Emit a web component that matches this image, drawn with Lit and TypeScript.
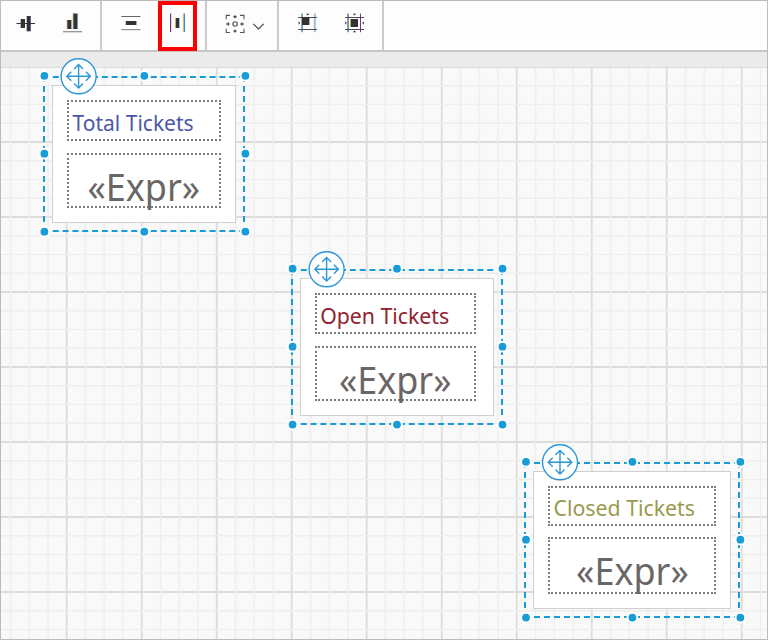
import { LitElement, html, svg, css } from "lit";
import { customElement, property } from "lit/decorators.js";
import { styleMap } from "lit/directives/style-map.js";

interface Box { x: number; y: number; w: number; h: number; }
interface Label { text: string; x: number; y: number; len: number; size: number; }
interface Tile {
  frame: Box;
  card: Box;
  title: Box;
  value: Box;
  color: string;
  titleText: Label;
  valueText: Label;
  hx: number[];
  hy: number[];
  move: [number, number];
}

const TILES: Tile[] = [
  {
    frame: { x: 43, y: 76, w: 202, h: 156 },
    card: { x: 52, y: 85, w: 184, h: 138 },
    title: { x: 67, y: 100, w: 154, h: 41 },
    value: { x: 67, y: 153, w: 154, h: 55 },
    color: "#4c56a6",
    titleText: { text: "Total Tickets", x: 72.6, y: 131, len: 121, size: 22.4 },
    valueText: { text: "«Expr»", x: 87.5, y: 201, len: 112.6, size: 38.4 },
    hx: [44.4, 144.3, 245.4], hy: [75.8, 153.7, 231.7], move: [78.6, 76.3],
  },
  {
    frame: { x: 291, y: 269, w: 212, h: 156 },
    card: { x: 300, y: 278, w: 194, h: 138 },
    title: { x: 315, y: 293, w: 161, h: 41 },
    value: { x: 315, y: 346, w: 161, h: 55 },
    color: "#922230",
    titleText: { text: "Open Tickets", x: 320.2, y: 324, len: 129, size: 22.4 },
    valueText: { text: "«Expr»", x: 338.9, y: 394, len: 112.6, size: 38.4 },
    hx: [292.6, 397, 502.5], hy: [268.7, 346.7, 424.6], move: [326.6, 269.3],
  },
  {
    frame: { x: 524, y: 462, w: 216, h: 156 },
    card: { x: 533, y: 471, w: 198, h: 138 },
    title: { x: 548, y: 486, w: 168, h: 40 },
    value: { x: 548, y: 537, w: 168, h: 57 },
    color: "#9a9a4e",
    titleText: { text: "Closed Tickets", x: 553.5, y: 516, len: 141.5, size: 22.4 },
    valueText: { text: "«Expr»", x: 576.1, y: 585, len: 112.6, size: 38.4 },
    hx: [526, 632.4, 740.4], hy: [461.8, 539.7, 617.6], move: [560, 462.3],
  },
];

@customElement("report-tile")
class ReportTile extends LitElement {
  @property({ attribute: false }) tile!: Tile;

  static styles = css`
    :host { display: contents; }
    .box { position: absolute; box-sizing: border-box; }
    .card { background: #fff; border: 1px solid #cfcfcf; }
    .dotted { border: 2px dotted #7c7c7c; }
    .frame { border: 2px dashed #189cd8; }
    .layer { position: absolute; left: 0; top: 0; width: 768px; height: 640px; pointer-events: none; }
    text { font-family: "Noto Sans", "Open Sans", sans-serif; }
  `;

  private box(cls: string, b: Box) {
    const s = { left: `${b.x}px`, top: `${b.y}px`, width: `${b.w}px`, height: `${b.h}px` };
    return html`<div class="box ${cls}" style=${styleMap(s)}></div>`;
  }

  private label(l: Label, fill: string) {
    return svg`<text x=${l.x} y=${l.y} font-size=${l.size} fill=${fill} textLength=${l.len} lengthAdjust="spacingAndGlyphs">${l.text}</text>`;
  }

  render() {
    const t = this.tile;
    const handles = t.hy.flatMap((y, r) => t.hx.filter((_, c) => !(r === 1 && c === 1)).map((x) => [x, y]));
    return html`
      ${this.box("card", t.card)}
      ${this.box("dotted", t.title)}
      ${this.box("dotted", t.value)}
      ${this.box("frame", t.frame)}
      <svg class="layer" viewBox="0 0 768 640">
        ${this.label(t.titleText, t.color)}
        ${this.label(t.valueText, "#6a6666")}
        ${handles.map(([x, y]) => svg`<circle cx=${x} cy=${y} r="4.9" fill="#189cd8" stroke="#fff" stroke-width="2"/>`)}
        <g transform="translate(${t.move[0]} ${t.move[1]})" fill="none" stroke="#2d97d5" stroke-width="1.4">
          <circle r="17.5" fill="#fff"/>
          <path d="M0-12V12M-12 0H12M-4.5-7.3L0-11.8L4.5-7.3M-4.5 7.3L0 11.8L4.5 7.3M-7.3-4.5L-11.8 0L-7.3 4.5M7.3-4.5L11.8 0L7.3 4.5"/>
        </g>
      </svg>`;
  }
}

const icon = (body: unknown) => html`<svg class="icon" viewBox="0 0 20 20">${body}</svg>`;

const alignMiddle = svg`
  <path d="M0.5 10.5H19" stroke="#333" fill="none"/>
  <path d="M4.7 6H9V15H4.7Z" fill="#333"/>
  <path d="M10.7 3H14.3V18.3H10.7Z" fill="#333"/><path d="M14.3 3H15V18.3H14.3Z" fill="#3a3a8c"/>`;
const alignBottom = svg`
  <path d="M1 18.7H20" stroke="#929292" stroke-width="1.3"/>
  <path d="M5.2 7H9.4V16H5.2ZM11.2 0.4H15.6V16H11.2Z" fill="#333"/>
  <path d="M4.6 7H5.2V16H4.6ZM10.6 0.4H11.2V16H10.6Z" fill="#e6b06c"/>
  <path d="M9.4 7H9.9V16H9.4ZM15.6 0.4H16.1V16H15.6Z" fill="#7fb4e0"/>`;
const spaceVertical = svg`
  <path d="M0.4 3.5H19.4" stroke="#646464"/><path d="M0.4 16.6H19.4" stroke="#929292" stroke-width="1.2"/>
  <path d="M5 8H15V12H5Z" fill="#333"/><path d="M4.2 8H5V12H4.2Z" fill="#e6b06c"/><path d="M15 8H15.5V12H15Z" fill="#3a4a9c"/>`;
const spaceHorizontal = svg`
  <path d="M3.5 0.5V19" stroke="#8c2a6b"/><path d="M4.5 0.5V19" stroke="#c9e6f2"/>
  <path d="M16.5 0.5V19" stroke="#e3b47a"/><path d="M17.5 0.5V19" stroke="#3390d2"/>
  <path d="M9 5H12V15H9Z" fill="#333"/><path d="M8 5H9V15H8Z" fill="#e0a560"/><path d="M12 5H12.8V15H12Z" fill="#7fb4e0"/>`;
const centerInParent = svg`
  <path d="M1.2 6.2V2.4H5M15 2.4H19V6.2M1.2 15.8V19.5H5M15 19.5H19V15.8" stroke="#555" stroke-width="1.1" fill="none"/>
  <rect x="8" y="9" width="4.2" height="4" rx="1.2" stroke="#4d4844" stroke-width="1.2" fill="none"/>
  <path d="M10 2.2V5M8.4 3.9H11.6M10 16.8V19.6M8.4 18H11.6M1 11H4.6M3.2 9.6V12.4M15.4 11H19M16.8 9.6V12.4" stroke="#333" stroke-width="1.2" fill="none"/>`;
const snapCorner = svg`
  <path d="M5.4 0.6V19.2" stroke="#4ba5dc"/><path d="M4.7 0.6V19.2" stroke="#555" stroke-width=".6"/>
  <path d="M17.2 0.6V19.2" stroke="#e9bd88" stroke-width=".8"/><path d="M18 0.6V19.2" stroke="#3c94d4" stroke-width=".9"/>
  <path d="M1.4 4.5H20M1.4 16.5H20" stroke="#4b4b4b"/>
  <path d="M5 4H12.4V12H5Z" fill="#333"/>
  <path d="M9 0.8H12.4L10.7 2.6ZM1.6 8.3V11.7L3.2 10Z" fill="#333"/>`;
const snapGrid = svg`
  <path d="M4.4 0.6V19.2" stroke="#3c94d4"/><path d="M3.6 0.6V19.2" stroke="#555" stroke-width=".6"/><path d="M16.5 0.6V19.2" stroke="#8c2a8a"/>
  <path d="M1.2 4.5H20M1.2 16.5H20" stroke="#4b4b4b"/>
  <path d="M6.8 6H14V14H6.8Z" fill="#333"/><path d="M6 6H7V14H6Z" fill="#e09a45"/>
  <path d="M8.8 0.8H12.2L10.5 2.6ZM8.8 19.3H12.2L10.5 17.6ZM1.2 8.3V11.7L2.8 10ZM19.8 8.3V11.7L18.2 10Z" fill="#333"/>`;

@customElement("app-root")
class AppRoot extends LitElement {
  static styles = css`
    :host { display: block; }
    .app {
      box-sizing: border-box; width: 768px; height: 640px; position: relative; overflow: hidden;
      display: flex; flex-direction: column; border: 1px solid #bcbcbc; background: #f9f9f9;
    }
    .toolbar { display: flex; height: 49px; flex: none; background: #fdfdfd; border-bottom: 2px solid #c6c6c6; }
    .group { display: flex; box-sizing: border-box; border-right: 2px solid #cacaca; padding-top: 12px; align-items: flex-start; }
    .g1 { width: 101px; padding-left: 15px; gap: 26px; }
    .g2 { width: 105px; padding-left: 19px; gap: 17px; }
    .g3 { width: 72px; padding-left: 18px; gap: 7px; }
    .g4 { width: 105px; padding-left: 18px; gap: 27px; }
    .icon { width: 20px; height: 20px; display: block; flex: none; }
    .chevron { width: 13px; height: 20px; display: block; }
    .marked {
      box-sizing: border-box; flex: none; width: 39px; height: 50px; margin-top: -12px; padding: 8px 0 0 5px;
      border: 4px solid #f00; position: relative; z-index: 1;
    }
    .strip { height: 15px; flex: none; background: #ebebeb; border-bottom: 1px solid #dcdcdc; }
    .canvas { flex: 1; min-height: 0; }
    .grid { display: block; width: 766px; height: 571px; }
    .tiles { position: absolute; left: -1px; top: -1px; width: 768px; height: 640px; }
  `;

  render() {
    const minor = [18.75, 37.5, 56.25];
    return html`
      <div class="app">
        <div class="toolbar">
          <div class="group g1">${icon(alignMiddle)}${icon(alignBottom)}</div>
          <div class="group g2">${icon(spaceVertical)}<div class="marked">${icon(spaceHorizontal)}</div></div>
          <div class="group g3">
            ${icon(centerInParent)}
            <svg class="chevron" viewBox="0 0 13 20"><path d="M1.3 10.8L6.5 16L11.7 10.8" fill="none" stroke="#444" stroke-width="1.2"/></svg>
          </div>
          <div class="group g4">${icon(snapCorner)}${icon(snapGrid)}</div>
        </div>
        <div class="strip"></div>
        <div class="canvas">
          <svg class="grid" viewBox="1 68 766 571">
            <defs>
              <pattern id="cells" x="65.8" y="141" width="75" height="75" patternUnits="userSpaceOnUse">
                <path d="M0.9 0V75" stroke="#dcdcdc" stroke-width="1.8"/>
                <path d="M0 1H75" stroke="#dcdcdc" stroke-width="2"/>
                ${minor.map((m) => svg`<path d="M${m + 0.9} 0V75M0 ${m + 1}H75" stroke="#eeeeee" stroke-width="1.5"/>`)}
              </pattern>
            </defs>
            <rect x="1" y="68" width="766" height="571" fill="url(#cells)"/>
          </svg>
        </div>
        <div class="tiles">${TILES.map((t) => html`<report-tile .tile=${t}></report-tile>`)}</div>
      </div>`;
  }
}
